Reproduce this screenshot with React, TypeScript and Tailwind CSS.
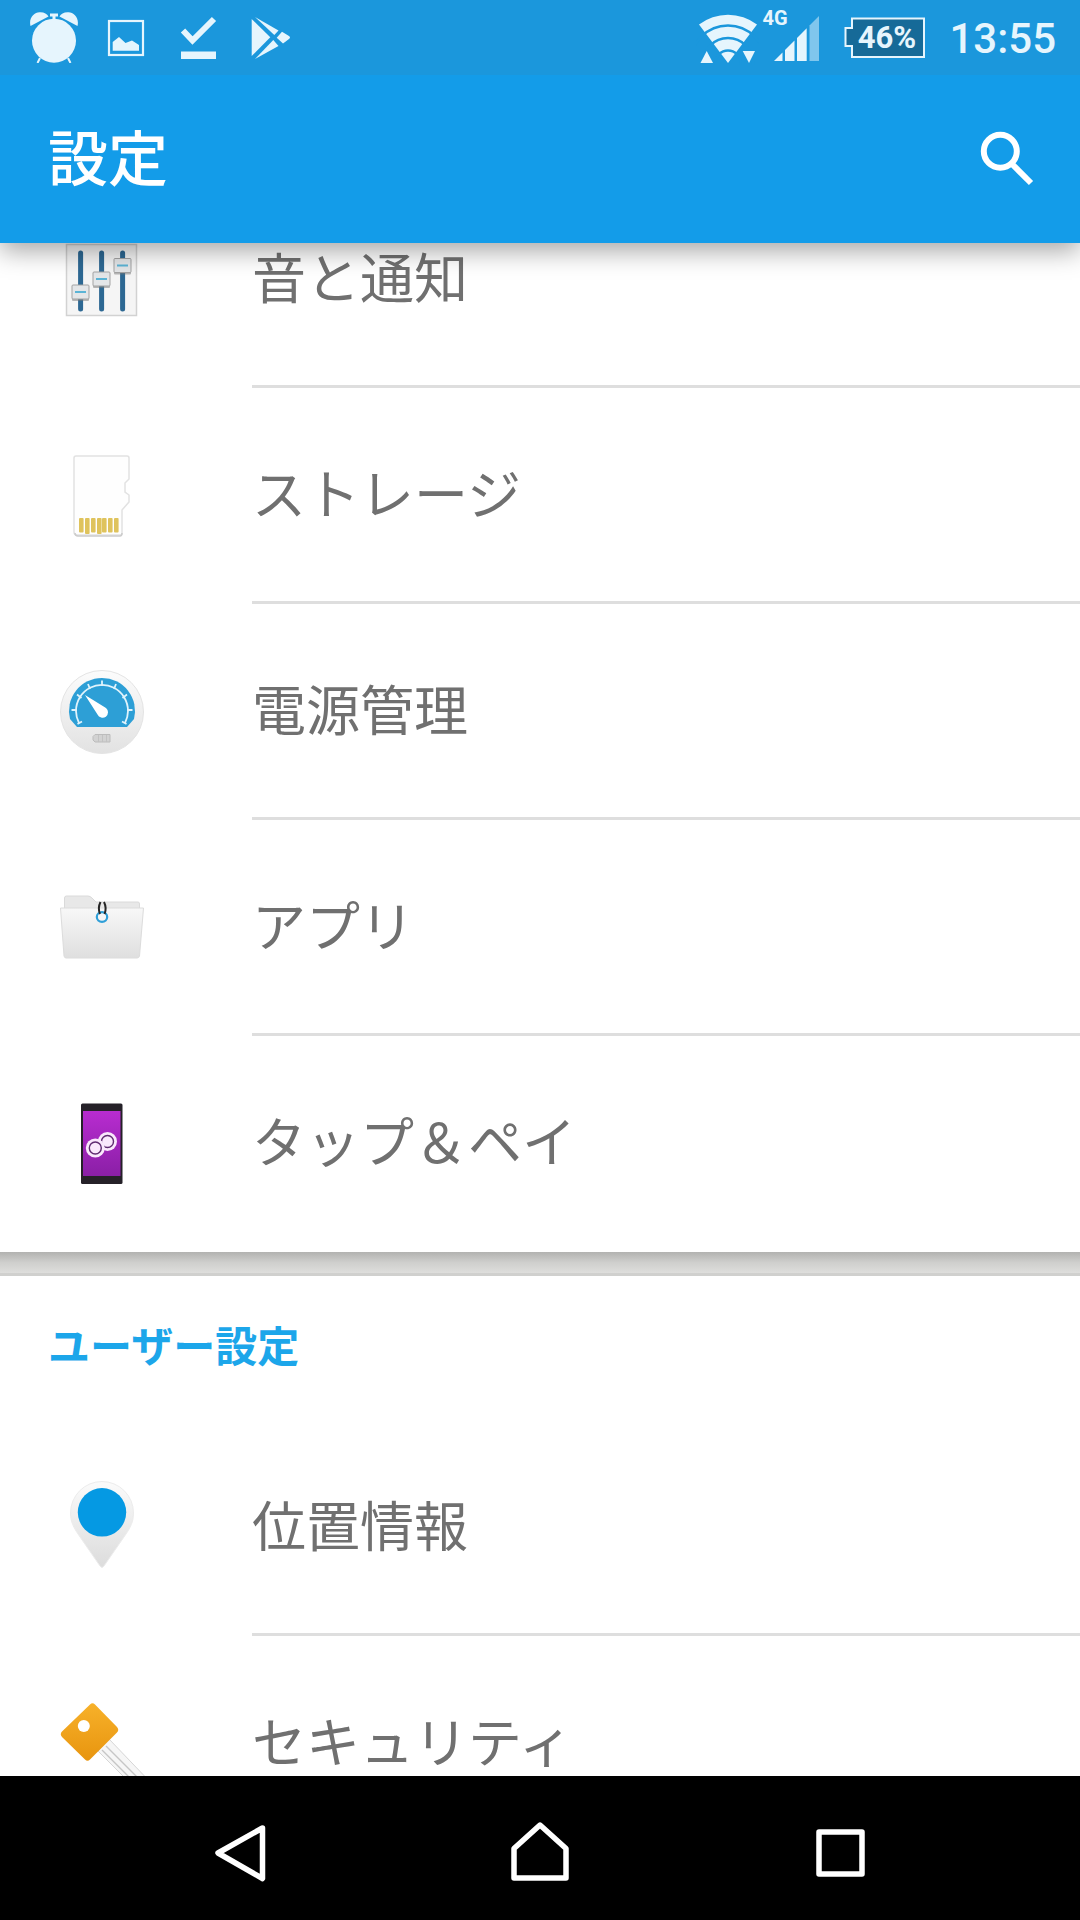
import { type ReactNode } from "react"

function SoundIcon() {
  return (
    <svg viewBox="0 0 120 120" className="h-30 w-30 shrink-0" aria-hidden="true">
      <rect x="24.5" y="24.5" width="70" height="71" fill="#f5f5f5" stroke="#d2d2d2" strokeWidth="1.5" />
      {[38.6, 59.6, 80.6].map((x) => (
        <path key={x} d={`M${x} 33V89`} stroke="#2d6893" strokeWidth="5" strokeLinecap="round" />
      ))}
      {[
        [30, 65],
        [51, 52],
        [72, 38.5],
      ].map(([x, y]) => (
        <g key={x}>
          <rect x={x} y={y + 1} width="17" height="15" rx="1" fill="#777777" opacity="0.5" />
          <rect x={x} y={y} width="17" height="14" rx="1" fill="#e4e6e8" stroke="#a3a3a3" />
          <path d={`M${x + 3} ${y + 7}h11`} stroke="#5bb4d6" strokeWidth="2" />
        </g>
      ))}
    </svg>
  )
}

function StorageIcon() {
  return (
    <svg viewBox="0 0 120 120" className="h-30 w-30 shrink-0" aria-hidden="true">
      <path
        d="M34 20H85Q87 20 87 22V43L83 47V56L87 59V66L80 74V97Q80 99 78 99H35Q32 99 32 96V22Q32 20 34 20Z"
        fill="#fefefe"
        stroke="#e2e2e2"
        strokeWidth="1.5"
      />
      <path d="M33 97Q33 100 36 100H78Q80 100 80 97" fill="none" stroke="#cccccc" strokeWidth="1.5" />
      {[37, 43, 49, 55, 60, 66, 72].map((x, i) => (
        <rect key={x} x={x} y="82" width="4.6" height={i === 1 || i === 3 ? 16 : 14.5} rx="1" fill="#dfc35c" />
      ))}
    </svg>
  )
}

function PowerIcon() {
  return (
    <svg viewBox="0 0 120 120" className="h-30 w-30 shrink-0" aria-hidden="true">
      <defs>
        <linearGradient id="dial" x1="0" y1="0" x2="0" y2="1">
          <stop offset="0" stopColor="#fcfcfc" />
          <stop offset="1" stopColor="#e2e2e2" />
        </linearGradient>
      </defs>
      <circle cx="60" cy="60" r="41.5" fill="url(#dial)" stroke="#e4e4e4" />
      <path d="M35 75L28 67A33 33 0 1 1 92 67L85 75Z" fill="#2d9fd6" />
      <path d="M37 71A26 26 0 1 1 83 71" fill="none" stroke="#dff3fc" strokeWidth="1.8" />
      <path
        d="M60 28.5V34M46 32L48 37M74 32L72 37M35 42.5L39.5 46M85 42.5L80.5 46M29.5 58H35M90.5 58H85M35.5 72L40 69.5M84.5 72L80 69.5"
        stroke="#dff3fc"
        strokeWidth="1.8"
      />
      <path d="M43 43L64 56A5.5 5.5 0 1 1 55.5 62.5Z" fill="#ffffff" />
      <path d="M53 82.5H68V90H53L51 88V84.5Z" fill="#d2d2d2" stroke="#bcbcbc" />
      <path d="M56.5 83V90M60.5 83V90M64.5 83V90" stroke="#c2c2c2" />
    </svg>
  )
}

function AppsIcon() {
  return (
    <svg viewBox="0 0 120 120" className="h-30 w-30 shrink-0" aria-hidden="true">
      <defs>
        <linearGradient id="folder" x1="0" y1="0" x2="0" y2="1">
          <stop offset="0" stopColor="#f8f8f8" />
          <stop offset="1" stopColor="#dfdfdf" />
        </linearGradient>
      </defs>
      <path d="M22.5 42V30Q22.5 28 24.5 28H46Q48 28 50 30L54 34H96Q97.5 34 97.5 36V42Z" fill="#e8e8e8" stroke="#dadada" />
      <path d="M18.5 40H101.5L97.5 88Q97 90 95 90H24Q22.5 90 22 88Z" fill="url(#folder)" stroke="#dcdcdc" />
      <ellipse cx="60" cy="49" rx="5.2" ry="4.8" fill="#f6f6f6" stroke="#2f9fd8" strokeWidth="2.2" />
      <path d="M58.5 34Q55.5 40 58 46M62 34Q65 40 62.5 46" fill="none" stroke="#252525" strokeWidth="2" />
    </svg>
  )
}

function TapPayIcon() {
  return (
    <svg viewBox="0 0 120 120" className="h-30 w-30 shrink-0" aria-hidden="true">
      <defs>
        <linearGradient id="screen" x1="0" y1="0" x2="0" y2="1">
          <stop offset="0" stopColor="#b82cd0" />
          <stop offset="1" stopColor="#8a1fa6" />
        </linearGradient>
      </defs>
      <rect x="39" y="19.5" width="41.5" height="80.5" rx="1.5" fill="#252128" />
      <rect x="41" y="27" width="37.5" height="65" fill="url(#screen)" />
      <circle cx="65.5" cy="57.5" r="9.5" fill="#fae8fc" />
      <circle cx="65.5" cy="57.5" r="6" fill="#fae8fc" stroke="#5f2a70" strokeWidth="1.4" />
      <circle cx="53.3" cy="64" r="9.5" fill="#fae8fc" />
      <circle cx="53.3" cy="64" r="6" fill="#fae8fc" stroke="#5f2a70" strokeWidth="1.4" />
    </svg>
  )
}

function LocationIcon() {
  return (
    <svg viewBox="0 0 120 120" className="h-30 w-30 shrink-0" aria-hidden="true">
      <defs>
        <linearGradient id="pin" x1="0" y1="0" x2="0" y2="1">
          <stop offset="0" stopColor="#fbfbfb" />
          <stop offset="1" stopColor="#dcdcdc" />
        </linearGradient>
      </defs>
      <path
        d="M60 13.5A31.5 31.5 0 0 0 28.5 45C28.5 54 32 60 36 66L58 98Q60 101 62 98L84 66C88 60 91.5 54 91.5 45A31.5 31.5 0 0 0 60 13.5Z"
        fill="url(#pin)"
        stroke="#ececec"
      />
      <circle cx="60" cy="44.3" r="24.2" fill="#0599e3" />
    </svg>
  )
}

function SecurityIcon() {
  return (
    <svg viewBox="0 0 120 120" className="h-30 w-30 shrink-0" aria-hidden="true">
      <defs>
        <linearGradient id="key" x1="0" y1="0" x2="0" y2="1">
          <stop offset="0" stopColor="#f7b12a" />
          <stop offset="1" stopColor="#e8950f" />
        </linearGradient>
      </defs>
      <path d="M56 67L96 107L112 102L67 55Z" fill="#f6f6f6" stroke="#d6d6d6" />
      <path d="M60 66L98 104M64 62L104 102" stroke="#c6c6c6" strokeWidth="1.4" />
      <path
        d="M48 20.5Q50.5 18 53 20.5L75 43Q77.5 46 75 48.5L48 75.5Q45.5 78 43 75.5L20 53Q17.5 50 20 47.5Z"
        fill="url(#key)"
      />
      <circle cx="41.8" cy="42" r="6" fill="#ffffff" />
    </svg>
  )
}

const deviceItems = [
  { label: "音と通知", icon: <SoundIcon /> },
  { label: "ストレージ", icon: <StorageIcon /> },
  { label: "電源管理", icon: <PowerIcon /> },
  { label: "アプリ", icon: <AppsIcon /> },
  { label: "タップ＆ペイ", icon: <TapPayIcon /> },
]

const userItems = [
  { label: "位置情報", icon: <LocationIcon /> },
  { label: "セキュリティ", icon: <SecurityIcon /> },
]

function SettingsList({ items }: { items: { label: string; icon: ReactNode }[] }) {
  return (
    <ul>
      {items.map((item, i) => (
        <li key={item.label}>
          <a href="#" className="flex h-54 pl-[42px] text-[54px] leading-[60px] text-[#707070]">
            <span className="flex w-[210px] shrink-0 items-center">{item.icon}</span>
            <span
              className={`flex flex-1 items-center border-b-3 pb-1.5 ${i < items.length - 1 ? "border-[#dedede]" : "border-transparent"}`}
            >
              {item.label}
            </span>
          </a>
        </li>
      ))}
    </ul>
  )
}

function StatusBar() {
  return (
    <div className="flex h-[75px] items-center justify-between bg-[#1b97dc] pr-6 pl-[30px] text-[#e6f5fd]">
      <div className="flex gap-6">
        {/* Alarm */}
        <svg viewBox="0 0 48 51" className="h-[51px] w-12" fill="currentColor" aria-hidden="true">
          <circle cx="24" cy="28.7" r="22" />
          <path d="M0.5 14C-1.5 6 4 0.5 9.5 0.3C14 0 17 2 18.5 4.5Z" />
          <path d="M47.5 14C49.5 6 44 0.5 38.5 0.3C34 0 31 2 29.5 4.5Z" />
          <path d="M20 1.5H28V4.5H25.5V8H22.5V4.5H20Z" />
          <path d="M10 46L7.5 51M38 46L40.5 51" stroke="currentColor" strokeWidth="2" />
        </svg>
        {/* Picture */}
        <svg viewBox="0 0 48 51" className="h-[51px] w-12" fill="currentColor" aria-hidden="true">
          <rect x="7" y="9" width="34" height="34" fill="none" stroke="currentColor" strokeWidth="2.2" />
          <path d="M10.7 38.7V30L17 25L23.5 31L30 28.5L37 33V38.7Z" />
        </svg>
        {/* Done */}
        <svg viewBox="0 0 48 51" className="h-[51px] w-12" fill="currentColor" aria-hidden="true">
          <path d="M9 18.5L18.5 28.5L40 7" fill="none" stroke="currentColor" strokeWidth="6" />
          <rect x="7" y="39.5" width="35" height="7.5" />
        </svg>
        {/* Play */}
        <svg viewBox="0 0 48 51" className="h-[51px] w-12" fill="currentColor" aria-hidden="true">
          <path d="M5.7 7L24.3 25.3L5.7 44Z" />
          <path d="M9 5L32.5 18.5L28.3 23Z" />
          <path d="M36 19.7L43 24Q45 25.7 43 27L37 31.5L30.7 25.7Z" />
          <path d="M9 47L32.5 34L27.3 28Z" />
        </svg>
      </div>

      <div className="flex items-center gap-6 pt-px">
        <div className="flex items-center gap-[15px]">
          {/* Wi-Fi */}
          <svg viewBox="0 0 63 54" className="h-[54px] w-[63px]" fill="currentColor" aria-hidden="true">
            <path d="M32 52L3 13.5A48 48 0 0 1 61 13.5Z" />
            <g fill="none" stroke="#1b97dc" strokeWidth="2.6">
              <circle cx="32" cy="52" r="37.5" />
              <circle cx="32" cy="52" r="25" />
              <circle cx="32" cy="52" r="12.5" />
            </g>
            <path d="M4.5 52L10.7 40L17 52Z" />
            <path d="M46.7 40L53 52L59 40Z" />
          </svg>
          <div className="relative">
            <span className="absolute -top-2.5 -left-3 font-[Roboto] text-[20px] leading-6 font-bold">4G</span>
            <svg viewBox="0 0 45 45" className="h-[45px] w-[45px]" fill="currentColor" aria-hidden="true">
              <path d="M0 45L8.5 36.5V45Z" />
              <path d="M11 45V34L20.5 24.5V45Z" />
              <path d="M23 45V22L32.7 12.3V45Z" />
              <path d="M35.5 45V9.5L45 0V45Z" opacity="0.5" />
            </svg>
          </div>
        </div>
        <svg viewBox="0 0 82 42" className="h-[42px] w-[82px]" role="img" aria-label="46%">
          <path d="M9 1.5H81V40H9V29H2.5V11H9Z" fill="#166a98" stroke="#e6f5fd" strokeWidth="2" />
          <text x="44" y="31" textAnchor="middle" className="fill-[#e6f5fd] font-[Roboto] text-[31px] font-bold">
            46%
          </text>
        </svg>
        <time className="pt-0.5 font-[Roboto] text-[42px] leading-12 font-medium">13:55</time>
      </div>
    </div>
  )
}

function NavBar() {
  return (
    <nav className="flex h-36 shrink-0 items-center bg-black px-[90px]">
      <button aria-label="戻る" className="flex flex-1 justify-center">
        <svg viewBox="0 0 72 72" className="h-18 w-18" fill="none" stroke="white" strokeWidth="5.5" strokeLinejoin="round">
          <path d="M58.5 16L14 41L58.5 66.5Z" />
        </svg>
      </button>
      <button aria-label="ホーム" className="flex flex-1 justify-center">
        <svg viewBox="0 0 72 72" className="h-18 w-18" fill="none" stroke="white" strokeWidth="5.5" strokeLinejoin="round">
          <path d="M36 13L62 36.5V66H10V36.5Z" />
        </svg>
      </button>
      <button aria-label="最近使ったアプリ" className="flex flex-1 justify-center">
        <svg viewBox="0 0 72 72" className="h-18 w-18" fill="none" stroke="white" strokeWidth="5.5" strokeLinejoin="round">
          <rect x="15" y="20" width="43" height="42" />
        </svg>
      </button>
    </nav>
  )
}

export default function App() {
  return (
    <div className="flex h-screen flex-col overflow-hidden bg-white font-['Noto_Sans_CJK_JP',sans-serif]">
      <header className="relative z-10 shrink-0 bg-[#139ce9] shadow-[0_8px_24px_rgba(0,0,0,0.35)]">
        <StatusBar />
        <div className="flex h-42 items-center justify-between pr-9 pl-12">
          <h1 className="pb-2 text-[60px] leading-[84px] font-medium text-white">設定</h1>
          <button aria-label="検索">
            <svg viewBox="0 0 72 72" className="h-18 w-18" fill="none" stroke="white">
              <circle cx="28.3" cy="28.3" r="16.5" strokeWidth="6" />
              <path d="M40.5 41.5L59 60" strokeWidth="6" />
            </svg>
          </button>
        </div>
      </header>

      <main className="min-h-0 flex-1 overflow-hidden">
        {/* The list is scrolled, so the first row sits partly under the header */}
        <section className="-mt-[71px]">
          <SettingsList items={deviceItems} />
        </section>
        <div className="h-6 border-b-3 border-[#d0d0ce] bg-linear-to-b from-[#b2b2b0] via-[#cfcfcd] to-[#dededc]" />
        <section>
          <h2 className="flex h-36 items-center pb-2 pl-12 text-[42px] leading-[60px] font-bold text-[#1ca6ea]">
            ユーザー設定
          </h2>
          <SettingsList items={userItems} />
        </section>
      </main>

      <NavBar />
    </div>
  )
}
